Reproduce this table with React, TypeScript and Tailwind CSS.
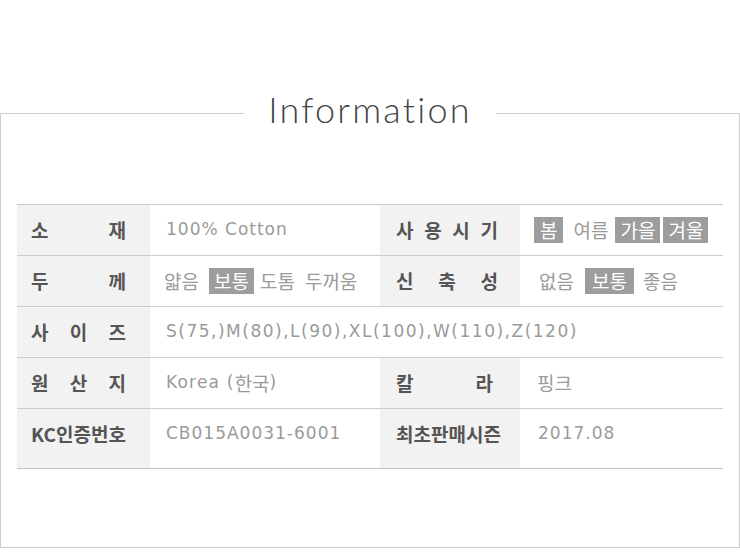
import React from 'react';

const labelFont = { fontFamily: '"Noto Sans CJK KR", "Noto Sans", sans-serif' };

// letters of a label spread out across the cell
function Spread({ text }: { text: string }) {
  return (
    <div className="flex w-full justify-between">
      {text.split('').map((ch, i) => (
        <span key={i}>{ch}</span>
      ))}
    </div>
  );
}

function Tag({ children, className = '' }: { children: React.ReactNode; className?: string }) {
  return (
    <span className={`inline-flex h-[26px] items-center bg-[#9d9d9d] text-white ${className}`}>
      {children}
    </span>
  );
}

function Label({ children, className = '' }: { children: React.ReactNode; className?: string }) {
  return (
    <div
      className={`flex items-center bg-[#f2f2f2] text-[19px] font-bold text-[#555] ${className}`}
      style={labelFont}
    >
      {children}
    </div>
  );
}

// latin values: DejaVu 17px
function Value({ children, className = '' }: { children: React.ReactNode; className?: string }) {
  return (
    <div
      className={`flex items-center text-[17px] text-[#9a9a9a] font-['DejaVu_Sans','Noto_Sans_CJK_KR',sans-serif] ${className}`}
    >
      {children}
    </div>
  );
}

// hangul values: Noto Sans CJK KR 19px
function KValue({ children, className = '' }: { children: React.ReactNode; className?: string }) {
  return (
    <div
      className={`flex items-center text-[19px] text-[#9a9a9a] font-['Noto_Sans_CJK_KR',sans-serif] ${className}`}
    >
      {children}
    </div>
  );
}

const row = 'grid h-[51px] grid-cols-[133px_230px_140px_203px] border-t border-[#cccccc]';

export default function App() {
  return (
    <div className="w-[740px] bg-white pt-[91px]">
      <fieldset className="w-[740px] border border-[#cccccc]">
        <legend className="mx-auto px-6 pb-2 text-[36px] leading-none font-light tracking-[2.2px] text-[#444] font-['Lato',sans-serif]">
          Information
        </legend>

        <div className="px-4 pt-[69px] pb-[78px]">
          <div className="border-b border-[#c4c4c4]">
            {/* 소재 / 사용시기 */}
            <div className={row}>
              <Label className="pl-[14px] pr-[24px]"><Spread text="소재" /></Label>
              <Value className="pl-4 tracking-[1px]">100% Cotton</Value>
              <Label className="pl-4 pr-[22px]"><Spread text="사용시기" /></Label>
              <KValue className="pl-[14px]">
                <Tag className="px-[6px]">봄</Tag>
                <span className="ml-[10px]">여름</span>
                <Tag className="ml-[7px] px-[5px]">가을</Tag>
                <Tag className="ml-[3px] px-[5px]">겨울</Tag>
              </KValue>
            </div>

            {/* 두께 / 신축성 */}
            <div className={row}>
              <Label className="pl-[14px] pr-[24px]"><Spread text="두께" /></Label>
              <KValue className="pl-[14px]">
                <span>얇음</span>
                <Tag className="ml-[10px] px-[5px]">보통</Tag>
                <span className="ml-[6px]">도톰</span>
                <span className="ml-[10px]">두꺼움</span>
              </KValue>
              <Label className="pl-4 pr-[22px]"><Spread text="신축성" /></Label>
              <KValue className="pl-[19px]">
                <span>없음</span>
                <Tag className="ml-[11px] px-[7px]">보통</Tag>
                <span className="ml-[9px]">좋음</span>
              </KValue>
            </div>

            {/* 사이즈 */}
            <div className={row}>
              <Label className="pl-[14px] pr-[24px]"><Spread text="사이즈" /></Label>
              <Value className="col-span-3 pl-4 tracking-[1.5px]">S(75,)M(80),L(90),XL(100),W(110),Z(120)</Value>
            </div>

            {/* 원산지 / 칼라 */}
            <div className={row}>
              <Label className="pl-[14px] pr-[24px]"><Spread text="원산지" /></Label>
              <Value className="pl-4 tracking-[1.2px]">
                Korea (<span className="text-[19px] tracking-normal font-['Noto_Sans_CJK_KR',sans-serif]">한국</span>)
              </Value>
              <Label className="pl-4 pr-[27px]"><Spread text="칼라" /></Label>
              <KValue className="pl-[17px]">핑크</KValue>
            </div>

            {/* KC인증번호 / 최초판매시즌 */}
            <div className={`${row} h-[60px]`}>
              <Label className="pl-[14px] pb-[9px]">KC인증번호</Label>
              <Value className="pl-4 pb-[9px] tracking-[1px]">CB015A0031-6001</Value>
              <Label className="pl-4 pb-[9px]">최초판매시즌</Label>
              <Value className="pl-[18px] pb-[9px] tracking-[1px]">2017.08</Value>
            </div>
          </div>
        </div>
      </fieldset>
    </div>
  );
}
